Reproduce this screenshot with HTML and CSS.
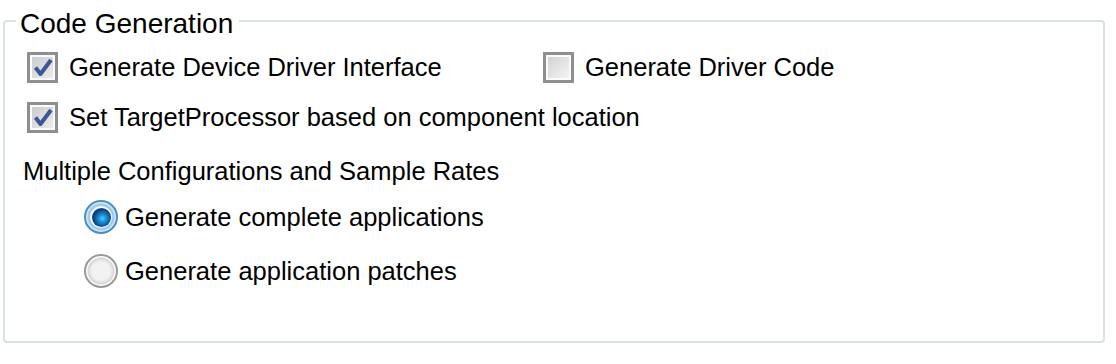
FILE: index.html
```html
<!DOCTYPE html>
<html lang="en">
  <head>
    <meta charset="utf-8" />
    <title>Code Generation</title>
    <link rel="stylesheet" href="styles.css">
  </head>
  <body>
    <fieldset class="group">
      <legend>Code Generation</legend>
      <div class="row">
        <label class="option option-wide">
          <span class="check checked">
            <svg viewBox="0 0 24 24" width="24" height="24"><path d="M4.5 12.5 L9.5 19 L20 5" /></svg>
          </span>
          Generate Device Driver Interface
        </label>
        <label class="option">
          <span class="check"></span>
          Generate Driver Code
        </label>
      </div>
      <div class="row">
        <label class="option">
          <span class="check checked">
            <svg viewBox="0 0 24 24" width="24" height="24"><path d="M4.5 12.5 L9.5 19 L20 5" /></svg>
          </span>
          Set TargetProcessor based on component location
        </label>
      </div>
      <div class="row heading">Multiple Configurations and Sample Rates</div>
      <div class="radios">
        <label class="option">
          <span class="radio checked"><span class="dot"></span></span>
          Generate complete applications
        </label>
        <label class="option">
          <span class="radio"></span>
          Generate application patches
        </label>
      </div>
    </fieldset>
  </body>
</html>
```

FILE: styles.css
```css
* {
  box-sizing: border-box;
}

body {
  margin: 0;
  background: #ffffff;
  font-family: "Liberation Sans", Arial, sans-serif;
  font-size: 25.5px;
  color: #000;
}

.group {
  margin: 3px 11px 0 3px;
  height: 340px;
  padding: 0 0 0 22px;
  border: 2px solid #d8e1e8;
  border-radius: 4px;
}

.group legend {
  margin-left: -11px;
  padding: 6px 6px 0 4px;
  font-size: 28px;
  line-height: 30px;
}

.row {
  display: flex;
  align-items: center;
  height: 50px;
}

.row:first-of-type {
  margin-top: 3px;
}

.heading {
  height: 58px;
  margin-left: -4px;
}

.radios {
  display: flex;
  flex-direction: column;
  gap: 20px;
  padding-left: 57px;
}

.option {
  display: flex;
  align-items: center;
  gap: 11px;
  height: 34px;
  white-space: nowrap;
}

.radios .option {
  gap: 7px;
}

.option-wide {
  width: 516px;
}

/* classic win7 checkbox */
.check {
  width: 31px;
  height: 31px;
  border: 3px solid #8e8f8f;
  background: linear-gradient(135deg, #cfd0d2, #f6f6f6);
  box-shadow: inset 0 0 0 2px #fbfbfb;
  display: flex;
  align-items: center;
  justify-content: center;
}

.check.checked {
  background: linear-gradient(135deg, #c9cacc, #eeeeee);
}

.check svg path {
  fill: none;
  stroke: #3b5797;
  stroke-width: 4;
  stroke-linejoin: round;
}

/* radio buttons */
.radio {
  width: 34px;
  height: 34px;
  border-radius: 50%;
  border: 2px solid #9a9a9a;
  background: radial-gradient(circle at 50% 50%, #f2f2f2 0, #f2f2f2 9px, #d6d6d6 13px, #ffffff 14px, #fdfdfd 15px);
  display: flex;
  align-items: center;
  justify-content: center;
  flex: none;
}

.radio.checked {
  border-color: #4a8fc0;
  background: radial-gradient(circle at 50% 50%, #ffffff 0, #ffffff 10px, #8ec3e6 12px, #c6e2f4 14px, #e4f1fa 15px);
}

.dot {
  width: 19px;
  height: 19px;
  border-radius: 50%;
  background: radial-gradient(circle at 55% 55%, #48d6ff 0, #1e9ce6 3px, #0a3f7a 9px);
}
```
